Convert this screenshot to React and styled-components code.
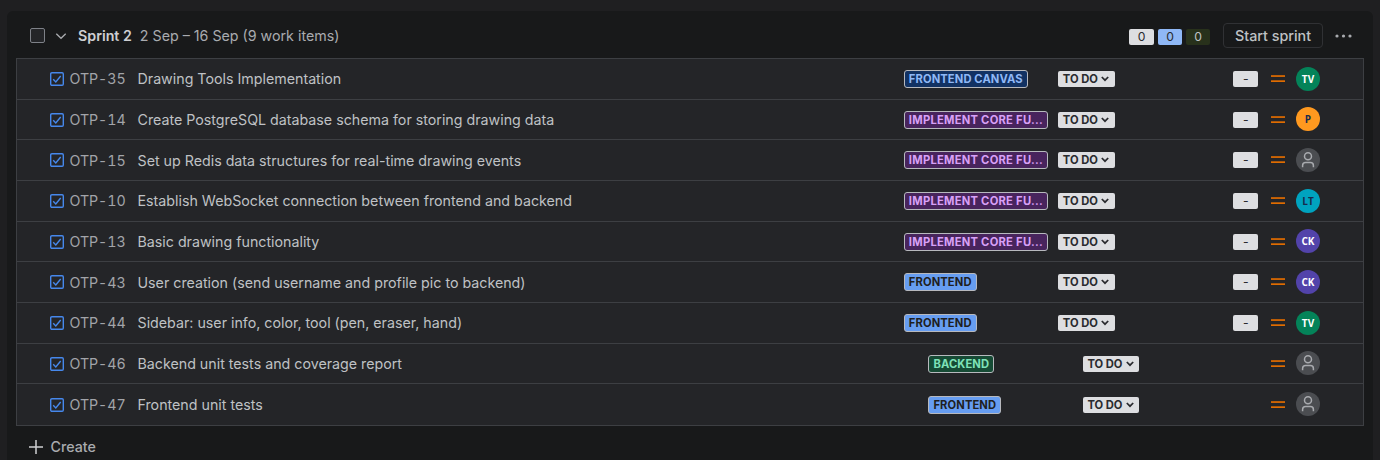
import React from "react";
import styled, { createGlobalStyle, css } from "styled-components";

const Global = createGlobalStyle`
  * { box-sizing: border-box; }
  html, body { margin: 0; background: #1f1f21; overflow: hidden; }
  body { font-family: Inter, "Liberation Sans", sans-serif; font-size: 14.24px; color: #bfc1c4; }
  svg { display: block; flex: none; }
`;

const Page = styled.div`
  height: 460px;
  padding: 11px 7px 0;
  overflow: hidden;
`;

const Panel = styled.section`
  height: 460px;
  padding: 0 9px;
  border-radius: 6px;
  background: #18191a;
`;

const Header = styled.header`
  display: flex;
  align-items: center;
  height: 47px;
  padding: 3px 12px 0 14px;
`;

const Checkbox = styled.span`
  width: 15px;
  height: 15px;
  margin: -2px 10px 0 0;
  border: 1px solid #7e8188;
  border-radius: 2px;
  background: #242528;
`;

const SprintName = styled.h2`
  margin: 0 8px 0 11px;
  font-size: 14.24px;
  font-weight: 600;
  line-height: 20px;
  color: #cecfd2;
`;

const SprintDates = styled.span`
  flex: 1;
  line-height: 20px;
  color: #a9abaf;
`;

const Badge = styled.span`
  display: flex;
  align-items: center;
  justify-content: center;
  flex: none;
  width: ${(p) => p.$width || 24}px;
  height: 16px;
  border-radius: 2px;
  font-size: 12.2px;
  line-height: 16px;
  background: ${(p) => p.$bg || "#dddee1"};
  color: ${(p) => p.$fg || "#292a2e"};
`;

const Totals = styled.div`
  display: flex;
  gap: 4px;
  margin: 2px 13px 0 0;
`;

const StartButton = styled.button`
  width: 100px;
  height: 25px;
  margin: 0 12px 1px 0;
  padding: 0;
  border: 1px solid #303134;
  border-radius: 4px;
  background: transparent;
  font: 500 14.3px Inter, sans-serif;
  color: #bfc1c4;
`;

const List = styled.div`
  border: solid #3d3f43;
  border-width: 0 1px 1px;
  background: #242528;
`;

const Row = styled.div`
  display: flex;
  align-items: center;
  height: 40.68px;
  padding: 0 43px 0 33px;
  border-top: 1px solid #3d3f43;
  &:last-child { height: 41.56px; }
`;

const Key = styled.span`
  width: 68px;
  margin-left: 5.5px;
  padding-top: 1px;
  line-height: 20px;
  color: #a2a4a9;
  font-variant-numeric: tabular-nums;
  letter-spacing: -0.05px;
`;

const Title = styled.span`
  flex: 1;
  padding-top: 1px;
  line-height: 20px;
`;

const EpicSlot = styled.div`
  width: 154.4px;
`;

const epicTones = {
  navy: css`background: #123263; color: #8fb8f6;`,
  purple: css`background: #48245d; color: #d8a0f7; width: 144px; letter-spacing: 0.25px;`,
  blue: css`background: #669df1; color: #1f1f21;`,
  green: css`background: #164b35; color: #7ee2b8;`,
};

const Epic = styled.span`
  display: block;
  width: fit-content;
  max-width: 144px;
  height: 18px;
  padding: 0 4px;
  border: 1px solid #b7b9be;
  border-radius: 3px;
  overflow: hidden;
  white-space: nowrap;
  font-size: 11.2px;
  font-weight: 700;
  line-height: 16px;
  letter-spacing: 0.1px;
  ${(p) => epicTones[p.$tone]}
`;

const StatusSlot = styled.div`
  width: 175.2px;
`;

const Status = styled.span`
  display: flex;
  align-items: center;
  gap: 3px;
  width: 56.6px;
  height: 16px;
  padding-left: 4.6px;
  border-radius: 2px;
  background: #dddee1;
  color: #292a2e;
  font-size: 11.2px;
  font-weight: 700;
  white-space: nowrap;
`;

const Priority = styled.div`
  margin: 0 11px 0 13px;
`;

const Avatar = styled.span`
  display: flex;
  align-items: center;
  justify-content: center;
  width: 24px;
  height: 24px;
  margin-bottom: 0.48px;
  border-radius: 50%;
  font: 700 10px "Open Sans", sans-serif;
  background: ${(p) => p.$bg};
  color: ${(p) => p.$fg || "#fff"};
`;

const Create = styled.div`
  display: flex;
  align-items: center;
  gap: 7.5px;
  height: 42px;
  padding-left: 13px;
  font-weight: 500;
  color: #a9abaf;
`;

const TaskIcon = () => (
  <svg width="14" height="14" viewBox="0 0 14 14" fill="none" stroke="#4688ec" strokeWidth="1.4">
    <rect x="0.7" y="0.7" width="12.6" height="12.6" rx="1.2" />
    <path d="M3.2 7.3 5.8 9.9 10.7 4" />
  </svg>
);

const PriorityIcon = () => (
  <svg width="14" height="10" viewBox="0 0 14 10" fill="#e06c00">
    <rect y="1.2" width="14" height="1.7" />
    <rect y="6.3" width="14" height="1.7" />
  </svg>
);

const PersonIcon = () => (
  <svg width="24" height="24" viewBox="0 0 24 24" fill="none" stroke="#a9abaf" strokeWidth="1.5">
    <circle cx="12" cy="8.2" r="3.5" />
    <path d="M6.6 19.2v-1.6a3 3 0 0 1 3-3h4.8a3 3 0 0 1 3 3v1.6" />
  </svg>
);

const people = {
  TV: { bg: "#048359" },
  P: { bg: "#ff991f", fg: "#172b4d" },
  LT: { bg: "#00a3bf", fg: "#172b4d" },
  CK: { bg: "#5243aa" },
};

const core = ["IMPLEMENT CORE FU...", "purple"];
const items = [
  ["OTP-35", "Drawing Tools Implementation", ["FRONTEND CANVAS", "navy"], true, "TV"],
  ["OTP-14", "Create PostgreSQL database schema for storing drawing data", core, true, "P"],
  ["OTP-15", "Set up Redis data structures for real-time drawing events", core, true, null],
  ["OTP-10", "Establish WebSocket connection between frontend and backend", core, true, "LT"],
  ["OTP-13", "Basic drawing functionality", core, true, "CK"],
  ["OTP-43", "User creation (send username and profile pic to backend)", ["FRONTEND", "blue"], true, "CK"],
  ["OTP-44", "Sidebar: user info, color, tool (pen, eraser, hand)", ["FRONTEND", "blue"], true, "TV"],
  ["OTP-46", "Backend unit tests and coverage report", ["BACKEND", "green"], false, null],
  ["OTP-47", "Frontend unit tests", ["FRONTEND", "blue"], false, null],
];

function Assignee({ initials }) {
  if (!initials) return <Avatar $bg="#4b4d51"><PersonIcon /></Avatar>;
  const person = people[initials];
  return <Avatar $bg={person.bg} $fg={person.fg}>{initials}</Avatar>;
}

function WorkItem({ item: [id, title, [epic, tone], points, assignee] }) {
  return (
    <Row>
      <TaskIcon />
      <Key>{id}</Key>
      <Title>{title}</Title>
      <EpicSlot><Epic $tone={tone}>{epic}</Epic></EpicSlot>
      <StatusSlot>
        <Status>
          TO DO
          <svg width="8" height="6" viewBox="0 0 8 6" fill="none" stroke="#292a2e" strokeWidth="1.7">
            <path d="M0.8 1 4 4.2 7.2 1" />
          </svg>
        </Status>
      </StatusSlot>
      {points && <Badge $width={24.6}>-</Badge>}
      <Priority><PriorityIcon /></Priority>
      <Assignee initials={assignee} />
    </Row>
  );
}

export default function App() {
  return (
    <Page>
      <Global />
      <Panel>
        <Header>
          <Checkbox />
          <svg width="12" height="8" viewBox="0 0 12 8" fill="none" stroke="#a9abaf" strokeWidth="1.3">
            <path d="M1.3 1.7 6 6.3 10.7 1.7" />
          </svg>
          <SprintName>Sprint 2</SprintName>
          <SprintDates>2 Sep – 16 Sep (9 work items)</SprintDates>
          <Totals>
            <Badge $width={25}>0</Badge>
            <Badge $bg="#8fb8f6">0</Badge>
            <Badge $bg="#28311b" $fg="#bfc1c4">0</Badge>
          </Totals>
          <StartButton>Start sprint</StartButton>
          <svg width="17" height="4" viewBox="0 0 17 4" fill="#a9abaf">
            <circle cx="2" cy="2" r="1.6" />
            <circle cx="8.5" cy="2" r="1.6" />
            <circle cx="15" cy="2" r="1.6" />
          </svg>
        </Header>
        <List>
          {items.map((item) => <WorkItem key={item[0]} item={item} />)}
        </List>
        <Create>
          <svg width="14" height="14" viewBox="0 0 14 14" stroke="#cecfd2" strokeWidth="1.5">
            <path d="M7 0v14M0 7h14" />
          </svg>
          Create
        </Create>
      </Panel>
    </Page>
  );
}
